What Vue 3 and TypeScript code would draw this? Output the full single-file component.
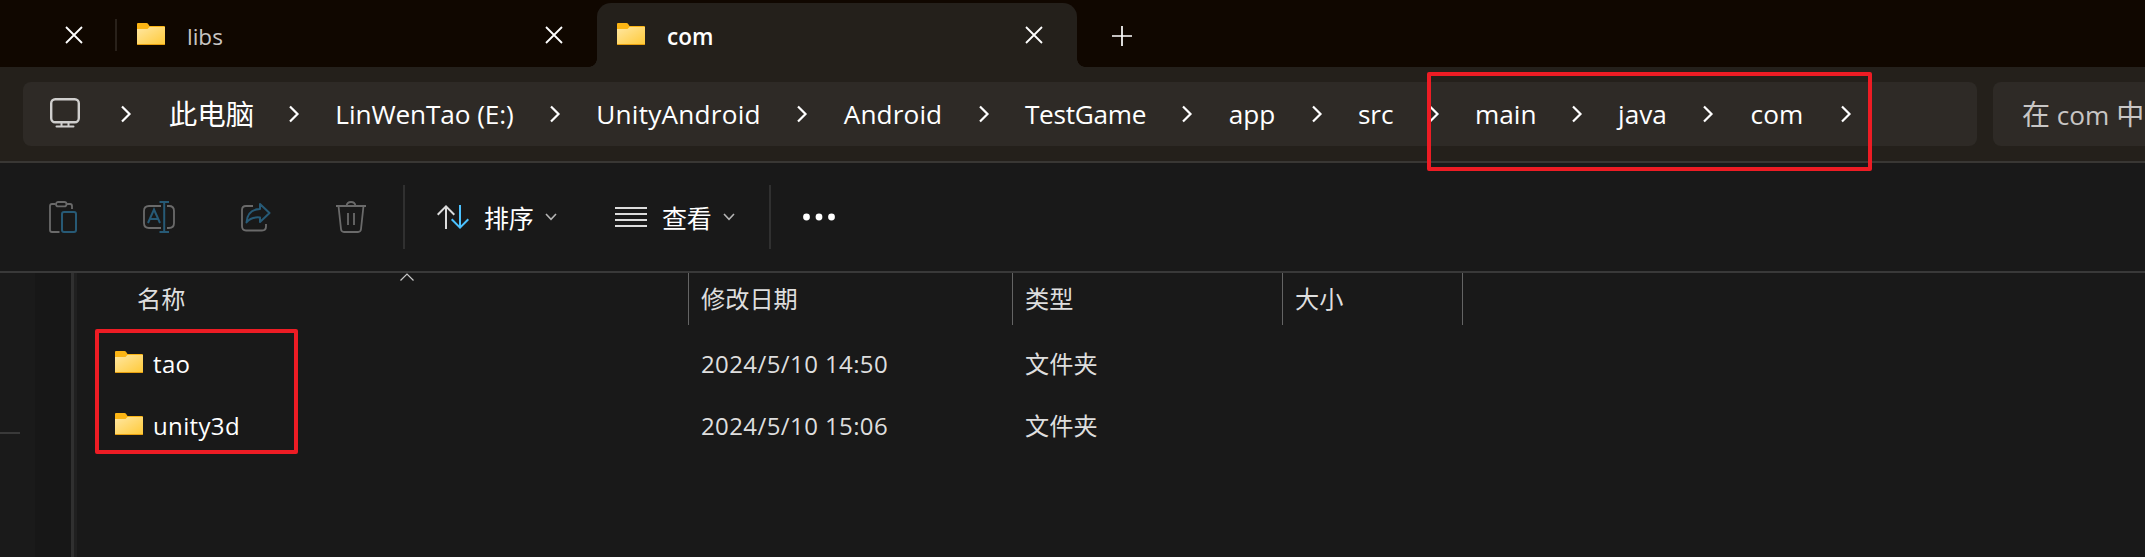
<script setup lang="ts">
interface Crumb { label: string; width: number; spacing: number; cjk?: boolean }
interface Entry { name: string; date: string; kind: string }

const crumbs: Crumb[] = [
  { label: '此电脑', width: 168, spacing: 0, cjk: true },
  { label: 'LinWenTao (E:)', width: 261, spacing: -0.1 },
  { label: 'UnityAndroid', width: 247, spacing: 0.2 },
  { label: 'Android', width: 182, spacing: 0.1 },
  { label: 'TestGame', width: 203, spacing: -0.3 },
  { label: 'app', width: 130, spacing: 0 },
  { label: 'src', width: 117.5, spacing: 0 },
  { label: 'main', width: 142.5, spacing: 0 },
  { label: 'java', width: 131, spacing: 0 },
  { label: 'com', width: 138, spacing: 0.2 },
]
const entries: Entry[] = [
  { name: 'tao', date: '2024/5/10 14:50', kind: '文件夹' },
  { name: 'unity3d', date: '2024/5/10 15:06', kind: '文件夹' },
]
</script>

<template>
  <div class="window">
    <svg class="defs" width="0" height="0">
      <defs>
        <linearGradient id="paper" x1="0" y1="0" x2="1" y2="1">
          <stop offset="0" stop-color="#ffe7a2" />
          <stop offset="1" stop-color="#ffca3a" />
        </linearGradient>
        <symbol id="folder" viewBox="0 0 28 22" preserveAspectRatio="none">
          <path d="M0 1Q0 0 1 0H9.5Q10.5 0 11 .7L12.5 3H27Q28 3 28 4V21Q28 22 27 22H1Q0 22 0 21Z" fill="#fcb514" />
          <path d="M0 6H10.5L12.5 4H28V21H0Z" fill="url(#paper)" />
          <path d="M0 21H28Q28 22 27 22H1Q0 22 0 21Z" fill="#e8a010" />
        </symbol>
        <symbol id="close" viewBox="0 0 18 18">
          <path d="M1 1L17 17M17 1L1 17" fill="none" stroke="#fff" stroke-width="1.8" />
        </symbol>
        <symbol id="right" viewBox="0 0 12 18">
          <path d="M2 1.5L9.5 9L2 16.5" fill="none" stroke="#fff" stroke-width="2.200" />
        </symbol>
        <symbol id="down" viewBox="0 0 12 8">
          <path d="M1 1L6 6.3L11 1" fill="none" stroke="#b4b4b4" stroke-width="1.6" />
        </symbol>
      </defs>
    </svg>

    <header class="tabs">
      <div class="tab first">
        <svg class="x"><use href="#close" /></svg>
      </div>
      <div class="tab">
        <svg class="folder"><use href="#folder" /></svg>
        <span class="title">libs</span>
        <svg class="x"><use href="#close" /></svg>
      </div>
      <div class="tab active">
        <svg class="folder"><use href="#folder" /></svg>
        <span class="title">com</span>
        <svg class="x"><use href="#close" /></svg>
      </div>
      <svg class="plus" viewBox="0 0 20 20"><path d="M0 10H20M10 0V20" stroke="#fff" stroke-width="1.7" /></svg>
    </header>

    <nav class="address">
      <div class="path">
        <svg class="monitor" viewBox="0 0 30 30" fill="none" stroke="#cfcecd" stroke-width="2.400">
          <rect x="1.200" y="1.200" width="27.600" height="23" rx="4" />
          <path d="M11.500 24V28M18.500 24V28M6.500 28.600H23.500" stroke-width="2" stroke-linecap="round" />
        </svg>
        <svg class="sep"><use href="#right" /></svg>
        <template v-for="c in crumbs" :key="c.label">
          <span class="crumb" :class="{ cjk: c.cjk }" :style="{ width: c.width - 12 + 'px', letterSpacing: c.spacing + 'px' }">{{ c.label }}</span>
          <svg class="sep"><use href="#right" /></svg>
        </template>
      </div>
      <div class="search"><span class="han">在</span> com <span class="han">中</span></div>
    </nav>

    <section class="toolbar">
      <svg class="tool paste" viewBox="0 0 32 32" fill="none" stroke="#6a6a6a" stroke-width="1.8">
        <path d="M8.500 3H5Q3 3 3 5V29Q3 31 5 31H12.500M19.500 3H23Q25 3 25 5V8" />
        <rect x="9" y="1" width="10.500" height="4.400" rx="2.200" />
        <rect x="15" y="11" width="14" height="20" rx="2" stroke="#275a76" stroke-width="2" />
      </svg>
      <svg class="tool rename" viewBox="0 0 32 32" fill="none" stroke="#6a6a6a" stroke-width="1.8">
        <path d="M18 5H6Q1 5 1 10V22Q1 27 6 27H18M24 5H26Q31 5 31 10V22Q31 27 26 27H24" />
        <path d="M16.500 1H26M16.500 31H26M21.200 1V31M5 22L11 8.500L17 22M7 18H15" stroke="#275a76" stroke-width="2" />
      </svg>
      <svg class="tool share" viewBox="0 0 32 32" fill="none" stroke="#6a6a6a" stroke-width="1.8">
        <path d="M14 5H7Q3 5 3 9V25Q3 29.500 7 29.500H23Q27 29.500 27 25.500V23" />
        <path d="M21 3L30.500 12L21 21V16.500Q12 15.500 7.500 21.500Q8.500 8.500 21 8Z" stroke="#275a76" stroke-width="2" stroke-linejoin="round" />
      </svg>
      <svg class="tool trash" viewBox="0 0 32 32" fill="none" stroke="#6a6a6a" stroke-width="1.8">
        <path d="M1 5H31M3.500 5L6 28Q6.300 31 9 31H23Q25.700 31 26 28L28.500 5M11.500 5Q12 1 16 1T20.500 5M13 12V24M19 12V24" />
      </svg>
      <i class="bar"></i>
      <svg class="sort" viewBox="0 0 32 24" fill="none" stroke-width="2">
        <path d="M9 24V1.500M.7 9.700L9 1.400L17.300 9.700" stroke="#dcdcdc" />
        <path d="M23 0V22.500M14.700 14.300L23 22.600L31.300 14.300" stroke="#4cc2ff" />
      </svg>
      <span class="label">排序</span>
      <svg class="chev"><use href="#down" /></svg>
      <svg class="view" viewBox="0 0 32 20"><path d="M0 1H32M0 7H32M0 13H32M0 19H32" stroke="#dcdcdc" stroke-width="2" /></svg>
      <span class="label">查看</span>
      <svg class="chev"><use href="#down" /></svg>
      <i class="bar second"></i>
      <svg class="dots" viewBox="0 0 32 8" fill="#fff"><circle cx="3.500" cy="4" r="3.400" /><circle cx="16" cy="4" r="3.400" /><circle cx="28.500" cy="4" r="3.400" /></svg>
    </section>

    <main class="content">
      <aside class="side"><hr class="rule" /><div class="track"></div></aside>
      <div class="list">
        <div class="head">
          <div class="cell name">名称
            <svg class="caret" viewBox="0 0 14 8"><path d="M.5 7.500L7 1L13.500 7.500" fill="none" stroke="#c8c8c8" stroke-width="1.200" /></svg>
          </div>
          <div class="cell">修改日期</div>
          <div class="cell">类型</div>
          <div class="cell">大小</div>
        </div>
        <div v-for="e in entries" :key="e.name" class="row">
          <div class="file"><svg class="folder"><use href="#folder" /></svg><span class="fname">{{ e.name }}</span></div>
          <div class="date">{{ e.date }}</div>
          <div class="kind">{{ e.kind }}</div>
        </div>
      </div>
    </main>

    <div class="mark path-mark"></div>
    <div class="mark file-mark"></div>
  </div>
</template>

<style>
body { margin: 0; background: #191919; overflow: hidden; }
</style>

<style scoped>
* { box-sizing: border-box; }
.window { position: relative; width: 2145px; height: 557px; overflow: hidden; background: #191919; color: #fff; font-family: "Open Sans", "Noto Sans CJK SC", sans-serif; font-size: 22.5px; display: flex; flex-direction: column; white-space: nowrap; }
.window svg { display: block; flex: none; }
.defs { position: absolute; }
.tabs { height: 67px; flex: none; display: flex; background: #100700; }
.tab { height: 64px; margin-top: 3px; width: 480px; display: flex; align-items: center; padding: 0 34px 0 20px; flex: none; }
.tab.first { width: 117px; height: 32px; margin-top: 19px; padding: 0 32px 0 0; justify-content: flex-end; border-right: 2px solid #29211a; }
.tab.first .x { margin-top: -1px; }
.tab.active { position: relative; background: #24201b; border-radius: 14px 14px 0 0; }
.tab.active::before, .tab.active::after { content: ""; position: absolute; bottom: 0; width: 8px; height: 8px; }
.tab.active::before { left: -8px; background: radial-gradient(circle at 0 0, transparent 7.5px, #24201b 8px); }
.tab.active::after { right: -8px; background: radial-gradient(circle at 100% 0, transparent 7.5px, #24201b 8px); }
.folder { width: 28px; height: 22px; }
.tab .folder { margin-top: -2px; }
.title { margin-left: 22px; margin-top: 3px; color: #c8c5c2; }
.active .title { color: #fff; font-weight: 600; }
.x { width: 18px; height: 18px; margin-left: auto; margin-top: -1px; }
.plus { width: 20px; height: 20px; margin: 26px 0 0 35px; }
.address { height: 96px; flex: none; background: #24201b; border-bottom: 2px solid #393734; display: flex; padding: 15px 0 0 23px; gap: 16px; font-size: 26.2px; }
.path { width: 1954px; height: 64px; border-radius: 8px; background: #2e2a26; display: flex; align-items: center; flex: none; }
.monitor { width: 30px; height: 30px; margin: -2px 39.5px 0 27px; }
.sep { width: 12px; height: 18px; }
.crumb { text-align: center; flex: none; padding-left: 1px; }
.crumb.cjk { font-size: 28.5px; padding-left: 4px; margin-top: -3px; }
.search { width: 180px; flex: none; height: 64px; border-radius: 8px 0 0 8px; background: #2e2a26; padding-left: 29px; line-height: 66px; color: #c8c6c5; }
.han { font-size: 28px; line-height: 1; }
.toolbar { height: 110px; flex: none; border-bottom: 2px solid #393939; display: flex; align-items: center; padding-left: 47px; }
.tool { width: 32px; height: 32px; }
.rename { margin-left: 64px; }
.share { margin-left: 64px; }
.trash { margin-left: 64px; }
.bar { width: 2px; height: 64px; background: #303030; margin-left: 36px; }
.sort { width: 32px; height: 24px; margin-left: 32px; }
.label { font-size: 25px; width: 48px; margin-left: 16px; text-indent: -1px; letter-spacing: -.3px; }
.chev { width: 12px; height: 8px; margin-left: 12px; }
.view { width: 32px; height: 20px; margin-left: 58px; }
.bar.second { margin-left: 34px; }
.dots { width: 32px; height: 8px; margin-left: 32px; }
.content { flex: 1; display: flex; color: #dedede; }
.side { width: 77px; display: flex; border-right: 3px solid #202020; background: linear-gradient(90deg, #1a1a1a 35px, #171717 35px); }
.rule { width: 20px; height: 2px; margin: 159px 0 0; border: 0; background: #393939; }
.track { width: 3px; margin-left: auto; background: #303030; }
.list { flex: 1; }
.head { display: grid; grid-template-columns: 612px 324px 270px 180px; height: 51px; margin-bottom: 8px; font-size: 24.2px; }
.cell { position: relative; border-right: 1px solid #646464; padding-left: 12px; line-height: 52px; }
.cell.name { padding-left: 60px; }
.caret { position: absolute; left: 322.5px; top: 0; width: 14px; height: 8px; }
.row { display: grid; grid-template-columns: 612px 324px 270px; height: 62px; align-items: center; }
.file { display: flex; align-items: center; padding-left: 38px; color: #fff; }
.file .folder { margin-top: -2px; }
.fname { margin-left: 10px; font-size: 24px; letter-spacing: .35px; }
.date, .kind { padding-left: 12px; }
.date { font-size: 24px; letter-spacing: .4px; }
.kind { font-size: 24.2px; margin-top: -1px; }
.mark { position: absolute; border: 4px solid #ed1c24; border-radius: 2px; }
.path-mark { left: 1427px; top: 72px; width: 445px; height: 99px; }
.file-mark { left: 95px; top: 329px; width: 203px; height: 125px; }
</style>
